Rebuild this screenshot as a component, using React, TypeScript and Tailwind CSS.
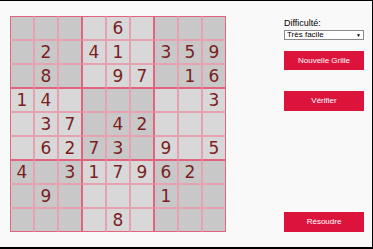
import { useState } from "react";

const PUZZLE = [
  "000060000",
  "020410359",
  "080097016",
  "140000003",
  "037042000",
  "062730905",
  "403179620",
  "090000100",
  "000080000",
];

// boxes alternate dark / light like a checkerboard
const isDarkBox = (r: number, c: number) =>
  (Math.floor(r / 3) + Math.floor(c / 3)) % 2 === 0;

const Cell = ({ r, c, value }: { r: number; c: number; value: string }) => {
  const left = c % 3 === 0 ? "border-l-[#e2657f]" : "border-l-[#e6a2b0]";
  const right = c % 3 === 2 ? "border-r-[#e2657f]" : "border-r-[#e6a2b0]";
  const top = r % 3 === 0 ? "border-t-[#e2657f]" : "border-t-[#e6a2b0]";
  const bottom = r % 3 === 2 ? "border-b-[#e2657f]" : "border-b-[#e6a2b0]";
  const bg = isDarkBox(r, c) ? "bg-[#c8c8c8]" : "bg-[#d8d8d8]";

  return (
    <div
      className={`w-6 h-6 border flex items-center justify-center text-[17px] leading-none text-[#7a1f1f] ${left} ${right} ${top} ${bottom} ${bg}`}
    >
      {value !== "0" ? value : ""}
    </div>
  );
};

export default function App() {
  const [level, setLevel] = useState("Très facile");

  return (
    <div className="w-[373px] h-[249px] bg-[#f9f9f9] border-t border-r border-b-2 border-black flex font-['Liberation_Sans',Arial,sans-serif] overflow-hidden">
      <div className="pl-[10px] pt-[15px]">
        <div className="grid grid-cols-9 w-[216px] font-['DejaVu_Sans',Verdana,sans-serif]">
          {PUZZLE.map((row, r) =>
            row
              .split("")
              .map((v, c) => <Cell key={`${r}-${c}`} r={r} c={c} value={v} />)
          )}
        </div>
      </div>

      <div className="ml-[58px] pt-[17px] flex flex-col w-[80px]">
        <label className="block text-[9px] leading-[11px] text-black">Difficulté:</label>
        <div className="relative h-[10px] mt-[1px] leading-none">
          <select
            value={level}
            onChange={(e) => setLevel(e.target.value)}
            className="block appearance-none w-[80px] h-[10px] bg-white border border-[#8a8a8a] text-[8px] leading-[8px] pl-[2px] py-0 text-black outline-none"
          >
            <option>Très facile</option>
            <option>Facile</option>
            <option>Moyen</option>
            <option>Difficile</option>
          </select>
          <span className="absolute right-[3px] top-[2px] text-[5px] leading-[6px] text-black pointer-events-none">
            ▼
          </span>
        </div>

        <button className="mt-[11px] h-[19px] w-[80px] bg-[#dc143c] text-white text-[8px]">
          Nouvelle Grille
        </button>
        <button className="mt-[21px] h-[20px] w-[80px] bg-[#dc143c] text-white text-[8px]">
          Vérifier
        </button>
        <button className="mt-[101px] h-[20px] w-[80px] bg-[#dc143c] text-white text-[8px]">
          Résoudre
        </button>
      </div>
    </div>
  );
}
